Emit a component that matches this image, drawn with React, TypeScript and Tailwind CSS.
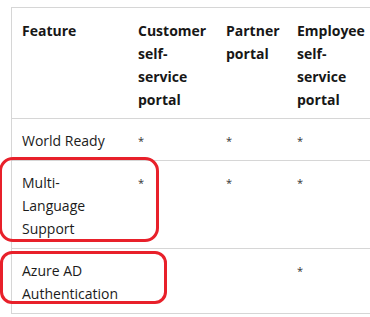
import React from "react";

const rows = [
  { feature: "World Ready", marks: ["*", "*", "*"] },
  { feature: "Multi-Language Support", marks: ["*", "*", "*"] },
  { feature: "Azure AD Authentication", marks: ["", "", "*"] },
];

const cols = "grid grid-cols-[116px_88px_71px_85px]";

export default function App() {
  return (
    <div className="relative w-[370px] h-[317px] overflow-hidden bg-white font-['Open_Sans',sans-serif] text-[14px] leading-[23px] text-[#1b1b1b]">
      <div className="mt-[7px] ml-[11px] w-[400px] border-l border-t border-[#d6d6d6]">
        <div className={`${cols} border-b border-[#d6d6d6] font-bold text-[#171717]`}>
          <div className="pl-[10px] pt-[11px] pb-[7px]">Feature</div>
          <div className="pl-[10px] pr-[4px] pt-[11px] pb-[7px]">Customer self-service portal</div>
          <div className="pl-[10px] pr-[4px] pt-[11px] pb-[7px]">Partner portal</div>
          <div className="pl-[10px] pr-[4px] pt-[11px] pb-[7px]">Employee self-service portal</div>
        </div>
        {rows.map((r) => (
          <div key={r.feature} className={`${cols} border-b border-[#d6d6d6]`}>
            <div className="pl-[10px] pr-[12px] pt-[10px] pb-[8px]">{r.feature}</div>
            {r.marks.map((m, i) => (
              <div key={i} className="pl-[10px] pt-[12px] pb-[8px] text-[11px] leading-[19px] text-[#333]">
                {m}
              </div>
            ))}
          </div>
        ))}
      </div>

      {/* red annotation boxes */}
      <div className="absolute left-[-1px] top-[157px] w-[160px] h-[85px] rounded-[14px] border-[3px] border-[#e8202a]" />
      <div className="absolute left-[0px] top-[251px] w-[167px] h-[53px] rounded-[12px] border-[3px] border-[#e8202a]" />
    </div>
  );
}
